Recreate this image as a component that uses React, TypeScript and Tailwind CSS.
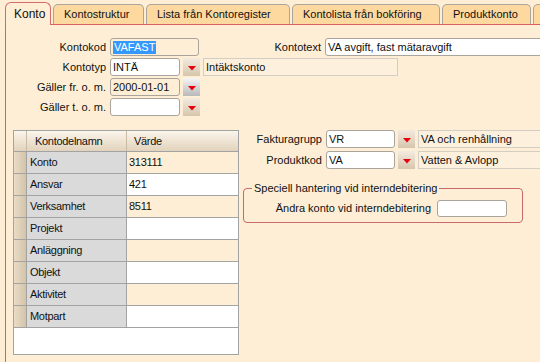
import React from "react"

const CREAM = "bg-[#feeed5]"

type Tab = { label: string; w: string; active?: boolean }

const tabs: Tab[] = [
    { label: "Konto", w: "w-[46px]", active: true },
    { label: "Kontostruktur", w: "w-[91px]" },
    { label: "Lista från Kontoregister", w: "w-[144px]" },
    { label: "Kontolista från bokföring", w: "w-[148px]" },
    { label: "Produktkonto", w: "w-[89px]" },
    { label: "", w: "w-[60px]" },
]

const gridRows = ["Konto", "Ansvar", "Verksamhet", "Projekt", "Anläggning", "Objekt", "Aktivitet", "Motpart"]
const gridValues: Record<string, string> = { Konto: "313111", Ansvar: "421", Verksamhet: "8511" }

const DropButton = ({ gray }: { gray?: boolean }) => (
    <div
        className={`w-[17px] h-[18px] shrink-0 flex items-center justify-center ${
            gray ? "bg-gradient-to-b from-[#f6f6f6] to-[#b9b9b9]" : "bg-gradient-to-b from-[#f3eadf] to-[#d6c6ad]"
        }`}
    >
        <svg width="8" height="5" viewBox="0 0 8 5" className="mt-[2px]">
            <polygon points="0,0 8,0 4,4.5" fill="#e8000b" />
        </svg>
    </div>
)

const TextBox = ({ value, w, white = true, selected }: { value?: string; w: string; white?: boolean; selected?: boolean }) => (
    <div
        className={`${w} h-[18px] shrink-0 rounded-[3px] border border-[#a9a49c] flex items-center pl-[2px] overflow-hidden whitespace-nowrap ${
            white ? "bg-white" : CREAM
        }`}
    >
        {selected ? <span className="bg-[#3399ff] text-white px-px leading-[13px]">{value}</span> : <span>{value}</span>}
    </div>
)

const ReadOnly = ({ value, w }: { value: string; w: string }) => (
    <div className={`${w} h-[18px] shrink-0 border border-[#d3cdc4] bg-[#fdf0dd] flex items-center pl-[2px] whitespace-nowrap`}>
        {value}
    </div>
)

const Label = ({ text, w }: { text: string; w: string }) => (
    <div className={`${w} shrink-0 text-right pr-[4px] whitespace-nowrap`}>{text}</div>
)

export default function App() {
    return (
        <div className={`w-[540px] h-[362px] overflow-hidden ${CREAM} flex flex-col text-[11px] text-[#111] font-['Liberation_Sans',Arial,sans-serif]`}>
            {/* tab strip */}
            <div className="h-[24px] shrink-0 flex items-end pl-[5px] gap-[2px] bg-[#feeed5]">
                {tabs.map((t, i) =>
                    t.active ? (
                        <div
                            key={i}
                            className={`${t.w} h-[23px] -mb-px shrink-0 relative z-10 border border-b-0 border-[#d46a6a] rounded-t-[6px] ${CREAM} flex items-center pl-[8px] text-[12px]`}
                        >
                            {t.label}
                        </div>
                    ) : (
                        <div
                            key={i}
                            className={`${t.w} h-[20px] shrink-0 border border-b-0 border-[#aaa59d] rounded-t-[5px] bg-[#fed99f] flex items-center pl-[10px] whitespace-nowrap overflow-hidden`}
                        >
                            {t.label}
                        </div>
                    )
                )}
            </div>

            {/* tab page */}
            <div className="flex-1 ml-[5px] border-l border-t border-[#d9605f] pt-[13px] flex flex-col">
                <div className="flex flex-col gap-[2px]">
                    <div className="flex items-center h-[18px]">
                        <Label text="Kontokod" w="w-[104px]" />
                        <TextBox value="VAFAST" w="w-[89px]" white={false} selected />
                        <Label text="Kontotext" w="w-[126px]" />
                        <TextBox value="VA avgift, fast mätaravgift" w="w-[230px]" />
                    </div>
                    <div className="flex items-center h-[18px]">
                        <Label text="Kontotyp" w="w-[104px]" />
                        <TextBox value="INTÄ" w="w-[70px]" />
                        <div className="ml-[3px]">
                            <DropButton />
                        </div>
                        <div className="ml-[3px]">
                            <ReadOnly value="Intäktskonto" w="w-[195px]" />
                        </div>
                    </div>
                    <div className="flex items-center h-[18px]">
                        <Label text="Gäller fr. o. m." w="w-[104px]" />
                        <TextBox value="2000-01-01" w="w-[70px]" white={false} />
                        <div className="ml-[3px]">
                            <DropButton gray />
                        </div>
                    </div>
                    <div className="flex items-center h-[18px]">
                        <Label text="Gäller t. o. m." w="w-[104px]" />
                        <TextBox w="w-[70px]" />
                        <div className="ml-[3px]">
                            <DropButton />
                        </div>
                    </div>
                </div>

                <div className="flex mt-[14px]">
                    {/* data grid */}
                    <div className="ml-[7px] w-[226px] h-[225px] shrink-0 border border-[#a3a3a3] bg-white flex flex-col text-[11px] tracking-[-0.3px]">
                        <div className="flex h-[21px] border-b border-[#a3a3a3] bg-gradient-to-b from-[#fbf5ec] to-[#e2d3bb]">
                            <div className="w-[13px] border-r border-[#c9bba4]" />
                            <div className="w-[100px] border-r border-[#c9bba4] flex items-center pl-[8px]">Kontodelnamn</div>
                            <div className="flex-1 flex items-center pl-[7px]">Värde</div>
                        </div>
                        {gridRows.map((name, i) => (
                            <div key={name} className="flex h-[22px] border-b border-[#a3a3a3]">
                                <div className="w-[13px] border-r border-[#a3a3a3] bg-gradient-to-r from-[#e9dcc8] to-[#d3c3a8]" />
                                <div className="w-[100px] border-r border-[#a3a3a3] bg-[#dadada] flex items-center pl-[3px]">{name}</div>
                                <div className={`flex-1 flex items-center pl-[2px] ${i % 2 === 0 ? "bg-[#fdeed5]" : "bg-white"}`}>
                                    {gridValues[name] ?? ""}
                                </div>
                            </div>
                        ))}
                    </div>

                    {/* right column */}
                    <div className="ml-[4px] flex flex-col">
                        <div className="flex flex-col gap-[3px]">
                            <div className="flex items-center h-[18px]">
                                <Label text="Fakturagrupp" w="w-[83px]" />
                                <TextBox value="VR" w="w-[69px]" />
                                <div className="ml-[3px]">
                                    <DropButton />
                                </div>
                                <div className="ml-[3px]">
                                    <ReadOnly value="VA och renhållning" w="w-[130px]" />
                                </div>
                            </div>
                            <div className="flex items-center h-[18px]">
                                <Label text="Produktkod" w="w-[83px]" />
                                <TextBox value="VA" w="w-[69px]" />
                                <div className="ml-[3px]">
                                    <DropButton />
                                </div>
                                <div className="ml-[3px]">
                                    <ReadOnly value="Vatten & Avlopp" w="w-[130px]" />
                                </div>
                            </div>
                        </div>

                        <fieldset className="mt-[13px] w-[280px] border border-[#c96a6a] rounded-[4px] pb-[5px]">
                            <legend className="ml-[8px] px-[2px] leading-[13px]">Speciell hantering vid interndebitering</legend>
                            <div className="flex items-center justify-end gap-[6px] pr-[15px] mt-[5px]">
                                <span>Ändra konto vid interndebitering</span>
                                <div className="w-[70px] h-[17px] rounded-[3px] border border-[#a9a49c] bg-white" />
                            </div>
                        </fieldset>
                    </div>
                </div>
            </div>
        </div>
    )
}
